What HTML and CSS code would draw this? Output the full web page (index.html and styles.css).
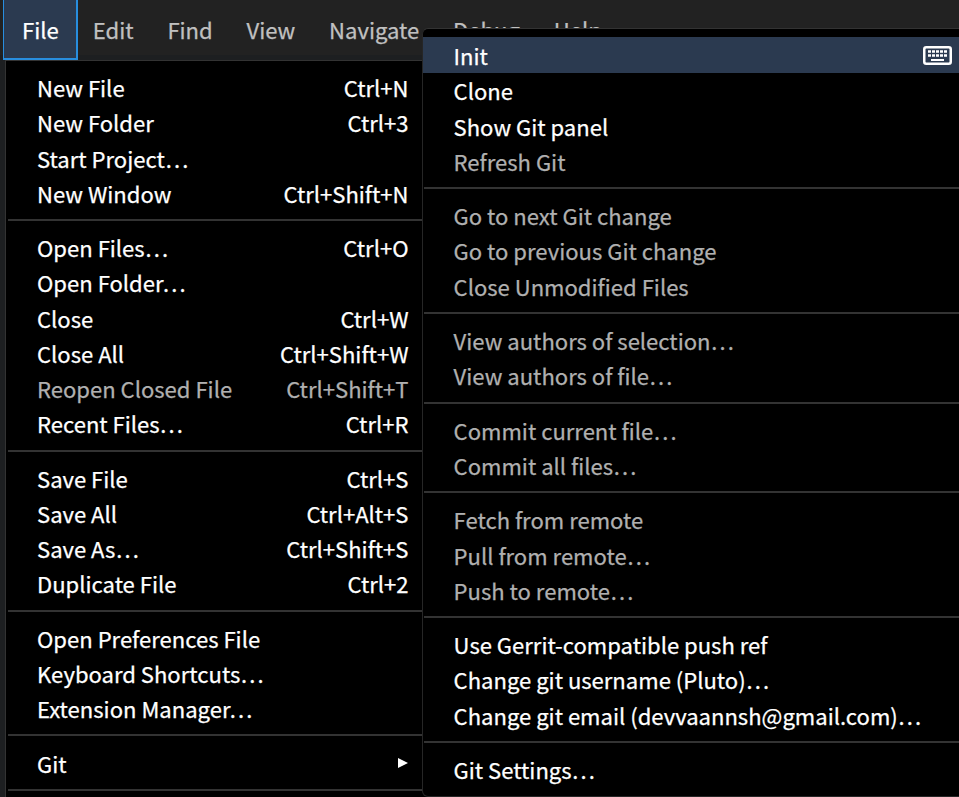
FILE: index.html
```
<!DOCTYPE html>
<html lang="en">
<head>
<meta charset="utf-8">
<title>Editor</title>
<link rel="stylesheet" href="styles.css">
</head>
<body>
<nav class="menubar">
  <span class="tab active">File</span><span class="tab">Edit</span><span class="tab">Find</span><span class="tab">View</span><span class="tab">Navigate</span><span class="tab">Debug</span><span class="tab">Help</span>
</nav>
<main class="menus">
<section class="menu file-menu">
  <div class="item"><span>New File</span><span>Ctrl+N</span></div>
  <div class="item"><span>New Folder</span><span>Ctrl+3</span></div>
  <div class="item"><span>Start Project…</span></div>
  <div class="item"><span>New Window</span><span>Ctrl+Shift+N</span></div>
  <hr>
  <div class="item"><span>Open Files…</span><span>Ctrl+O</span></div>
  <div class="item"><span>Open Folder…</span></div>
  <div class="item"><span>Close</span><span>Ctrl+W</span></div>
  <div class="item"><span>Close All</span><span>Ctrl+Shift+W</span></div>
  <div class="item disabled"><span>Reopen Closed File</span><span>Ctrl+Shift+T</span></div>
  <div class="item"><span>Recent Files…</span><span>Ctrl+R</span></div>
  <hr>
  <div class="item"><span>Save File</span><span>Ctrl+S</span></div>
  <div class="item"><span>Save All</span><span>Ctrl+Alt+S</span></div>
  <div class="item"><span>Save As…</span><span>Ctrl+Shift+S</span></div>
  <div class="item"><span>Duplicate File</span><span>Ctrl+2</span></div>
  <hr>
  <div class="item"><span>Open Preferences File</span></div>
  <div class="item"><span>Keyboard Shortcuts…</span></div>
  <div class="item"><span>Extension Manager…</span></div>
  <hr>
  <div class="item"><span>Git</span><svg class="arrow" viewBox="0 0 10 10"><path d="M0 0 10 5 0 10Z"/></svg></div>
  <hr>
</section>
<section class="menu git-menu">
  <div class="item selected"><span>Init</span>
    <svg class="keyboard" viewBox="0 0 29 19"><rect x="1.25" y="1.25" width="26.5" height="16.5" rx="2" fill="none" stroke="#fff" stroke-width="2.5"/><path d="M5 5.5h19M5 9.5h19" stroke="#fff" stroke-width="2.6" stroke-dasharray="3 1"/><path d="M8 14h13" stroke="#fff" stroke-width="2"/></svg>
  </div>
  <div class="item"><span>Clone</span></div>
  <div class="item"><span>Show Git panel</span></div>
  <div class="item disabled"><span>Refresh Git</span></div>
  <hr>
  <div class="item disabled"><span>Go to next Git change</span></div>
  <div class="item disabled"><span>Go to previous Git change</span></div>
  <div class="item disabled"><span>Close Unmodified Files</span></div>
  <hr>
  <div class="item disabled"><span>View authors of selection…</span></div>
  <div class="item disabled"><span>View authors of file…</span></div>
  <hr>
  <div class="item disabled"><span>Commit current file…</span></div>
  <div class="item disabled"><span>Commit all files…</span></div>
  <hr>
  <div class="item disabled"><span>Fetch from remote</span></div>
  <div class="item disabled"><span>Pull from remote…</span></div>
  <div class="item disabled"><span>Push to remote…</span></div>
  <hr>
  <div class="item"><span>Use Gerrit-compatible push ref</span></div>
  <div class="item"><span>Change git username (Pluto)…</span></div>
  <div class="item"><span>Change git email (devvaannsh@gmail.com)…</span></div>
  <hr>
  <div class="item"><span>Git Settings…</span></div>
</section>
</main>
</body>
</html>
```
FILE: styles.css
```
* { box-sizing: border-box; }
body {
  margin: 0;
  height: 797px;
  overflow: hidden;
  background: #1d1f21;
  color: #fff;
  font: 22.06px/35px "Noto Sans CJK SC", "Noto Sans CJK JP", sans-serif;
  -webkit-text-stroke: 0.25px currentColor;
}
.menubar {
  display: flex;
  height: 55px;
  padding-left: 3px;
  background: #222;
}
.tab {
  height: 60px;
  padding: 12px 17px 0 16.8px;
  color: #c0c0c0;
  white-space: nowrap;
}
.tab.active {
  width: 75px;
  margin-right: -2px;
  padding: 12px 0 0 18px;
  border: solid #288edf;
  border-width: 0 2px 2px 1px;
  background: #2b3a50;
  color: #fff;
  z-index: 1;
}
.menu {
  position: absolute;
  background: #000;
  border: 1px solid #333;
}
.file-menu {
  top: 60px;
  left: 5px;
  width: 430px;
  height: 750px;
  padding: 8px 0 0 2px;
}
.git-menu {
  top: 28px;
  left: 422px;
  width: 560px;
  height: 769px;
  padding-top: 8px;
  border-color: #262626;
  border-top-color: #333;
  border-radius: 6px;
  z-index: 2;
}
.item {
  display: flex;
  justify-content: space-between;
  align-items: center;
  height: 35.2px;
  padding: 2.2px 25.5px 0 29px;
  white-space: nowrap;
}
.git-menu .item { padding-left: 30.6px; }
.git-menu .selected { background: #2b3a50; height: 36px; margin-bottom: -0.8px; padding-top: 1.4px; }
.disabled { color: #b0b0b0; }
hr {
  height: 2px;
  margin: 9.4px 0 7.9px;
  border: 0;
  background: #333;
}
.git-menu hr { margin-left: 1px; }
.arrow {
  width: 10px;
  height: 10px;
  fill: #fff;
  margin: 0 1px 0 0;
}
.keyboard {
  width: 29px;
  height: 19px;
  margin: 0 4px 0 0;
}
```
